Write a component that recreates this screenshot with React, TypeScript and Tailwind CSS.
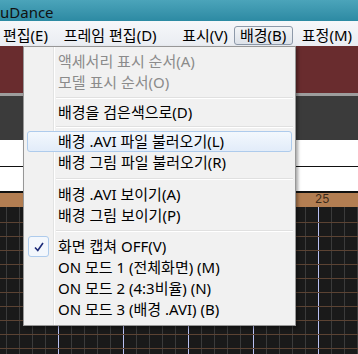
import React from "react";

type Entry =
  | { label: string; disabled?: boolean; checked?: boolean; active?: boolean }
  | { sep: string };

const menu: Entry[] = [
  { label: "액세서리 표시 순서(A)", disabled: true },
  { label: "모델 표시 순서(O)", disabled: true },
  { sep: "h-[9px]" },
  { label: "배경을 검은색으로(D)" },
  { sep: "h-[8px]" },
  { label: "배경 .AVI 파일 불러오기(L)", active: true },
  { label: "배경 그림 파일 불러오기(R)" },
  { sep: "h-[11px]" },
  { label: "배경 .AVI 보이기(A)" },
  { label: "배경 그림 보이기(P)" },
  { sep: "h-[10px]" },
  { label: "화면 캡쳐 OFF(V)", checked: true },
  { label: "ON 모드 1 (전체화면) (M)" },
  { label: "ON 모드 2 (4:3비율) (N)" },
  { label: "ON 모드 3 (배경 .AVI) (B)" },
];

const Grid = () => {
  const rows: number[] = [];
  for (let y = 15; y < 147; y += 14) rows.push(y);
  const cols: number[] = [];
  for (let x = 6; x < 358; x += 13) cols.push(x);
  return (
    <svg width="358" height="147" className="block">
      <rect width="358" height="147" fill="#1a1a1a" />
      {cols.map((x) => (
        <line
          key={"v" + x}
          x1={x + 0.5}
          x2={x + 0.5}
          y1="0"
          y2="147"
          stroke={(x - 58) % 65 === 0 ? "#b9c0f2" : "#3b3b3b"}
          strokeWidth="1"
        />
      ))}
      {rows.map((y) => (
        <line key={"h" + y} x1="0" x2="358" y1={y + 0.5} y2={y + 0.5} stroke="#5c4333" strokeWidth="1" />
      ))}
    </svg>
  );
};

const CheckMark = () => (
  <svg width="12" height="12" viewBox="0 0 12 12">
    <path d="M2 6.5 L4.8 9.5 L10 2" fill="none" stroke="#1c2a78" strokeWidth="1.6" />
  </svg>
);

export default function App() {
  return (
    <div className="relative w-[358px] h-[354px] overflow-hidden bg-white font-['Noto_Sans','Noto_Sans_CJK_KR',sans-serif] text-[15px] text-black">
      {/* title bar */}
      <div className="h-[21px] bg-gradient-to-b from-[#4ba4ba] to-[#2c8aa3] flex items-center pt-[4px] text-[15px] text-[#111]">
        uDance
      </div>

      {/* menu bar */}
      <div className="h-[25px] bg-gradient-to-b from-[#f6f7fa] to-[#eaedf2] flex items-start pt-[5px] whitespace-nowrap">
        <div className="ml-[-3px] w-[61px] h-[19px] flex items-center px-[6px]">편집(E)</div>
        <div className="w-[119px] h-[19px] flex items-center px-[6px]">프레임 편집(D)</div>
        <div className="w-[58px] h-[19px] flex items-center px-[6px]">표시(V)</div>
        <div className="w-[59px] h-[19px] flex items-center px-[5px] border border-[#8d99a9] rounded-[3px] bg-gradient-to-b from-[#f2f4f7] to-[#dde2e9]">
          배경(B)
        </div>
        <div className="ml-[3px] h-[19px] flex items-center px-[6px]">표정(M)</div>
      </div>

      {/* background panels */}
      <div className="h-[47px] bg-[#692c2e]" />
      <div className="h-[3px] bg-[#9d9d9d]" />
      <div className="h-[44px] bg-[#3b3b3b]" />
      <div className="h-[26px] bg-white" />
      <div className="h-[1px] bg-[#111]" />
      <div className="h-[24px] bg-white" />
      <div className="h-[2px] bg-[#111]" />
      <div className="relative h-[14px] bg-[#b37e52]">
        <span className="absolute left-[315px] top-[0px] font-['Liberation_Mono',monospace] text-[12px] leading-[14px] text-[#3a2818]">
          25
        </span>
      </div>
      <Grid />

      {/* dropdown */}
      <div className="absolute left-[23px] top-[46px] w-[273px] h-[280px] bg-[#f1f1f1] border border-[#979797] shadow-[2px_2px_3px_rgba(0,0,0,0.35)] pt-[4px]">
        <div className="absolute left-[29px] top-0 bottom-0 w-[1px] bg-[#e2e3e3]" />
        <div className="absolute left-[30px] top-0 bottom-0 w-[1px] bg-white" />
        {menu.map((m, i) =>
          "sep" in m ? (
            <div key={i} className={`relative ${m.sep} flex items-center pl-[32px] pr-[2px]`}>
              <div className="w-full">
                <div className="h-[1px] bg-[#e0e0e0]" />
                <div className="h-[1px] bg-white" />
              </div>
            </div>
          ) : (
            <div key={i} className="relative h-[21px] flex items-center px-[3px] whitespace-nowrap">
              {m.active && (
                <div className="absolute left-[3px] right-[3px] top-0 bottom-0 rounded-[3px] border border-[#aecbec] bg-gradient-to-b from-[#f3f8fd] to-[#e2ecf9]" />
              )}
              <div className="relative w-[31px] h-[21px] flex items-center justify-start">
                {m.checked && (
                  <div className="w-[21px] h-[21px] ml-[1px] rounded-[3px] border border-[#aecbec] bg-[#f3f7fc] flex items-center justify-center">
                    <CheckMark />
                  </div>
                )}
              </div>
              <span className={`relative ${m.disabled ? "text-[#8b8b8b]" : "text-black"}`}>{m.label}</span>
            </div>
          )
        )}
      </div>
    </div>
  );
}
